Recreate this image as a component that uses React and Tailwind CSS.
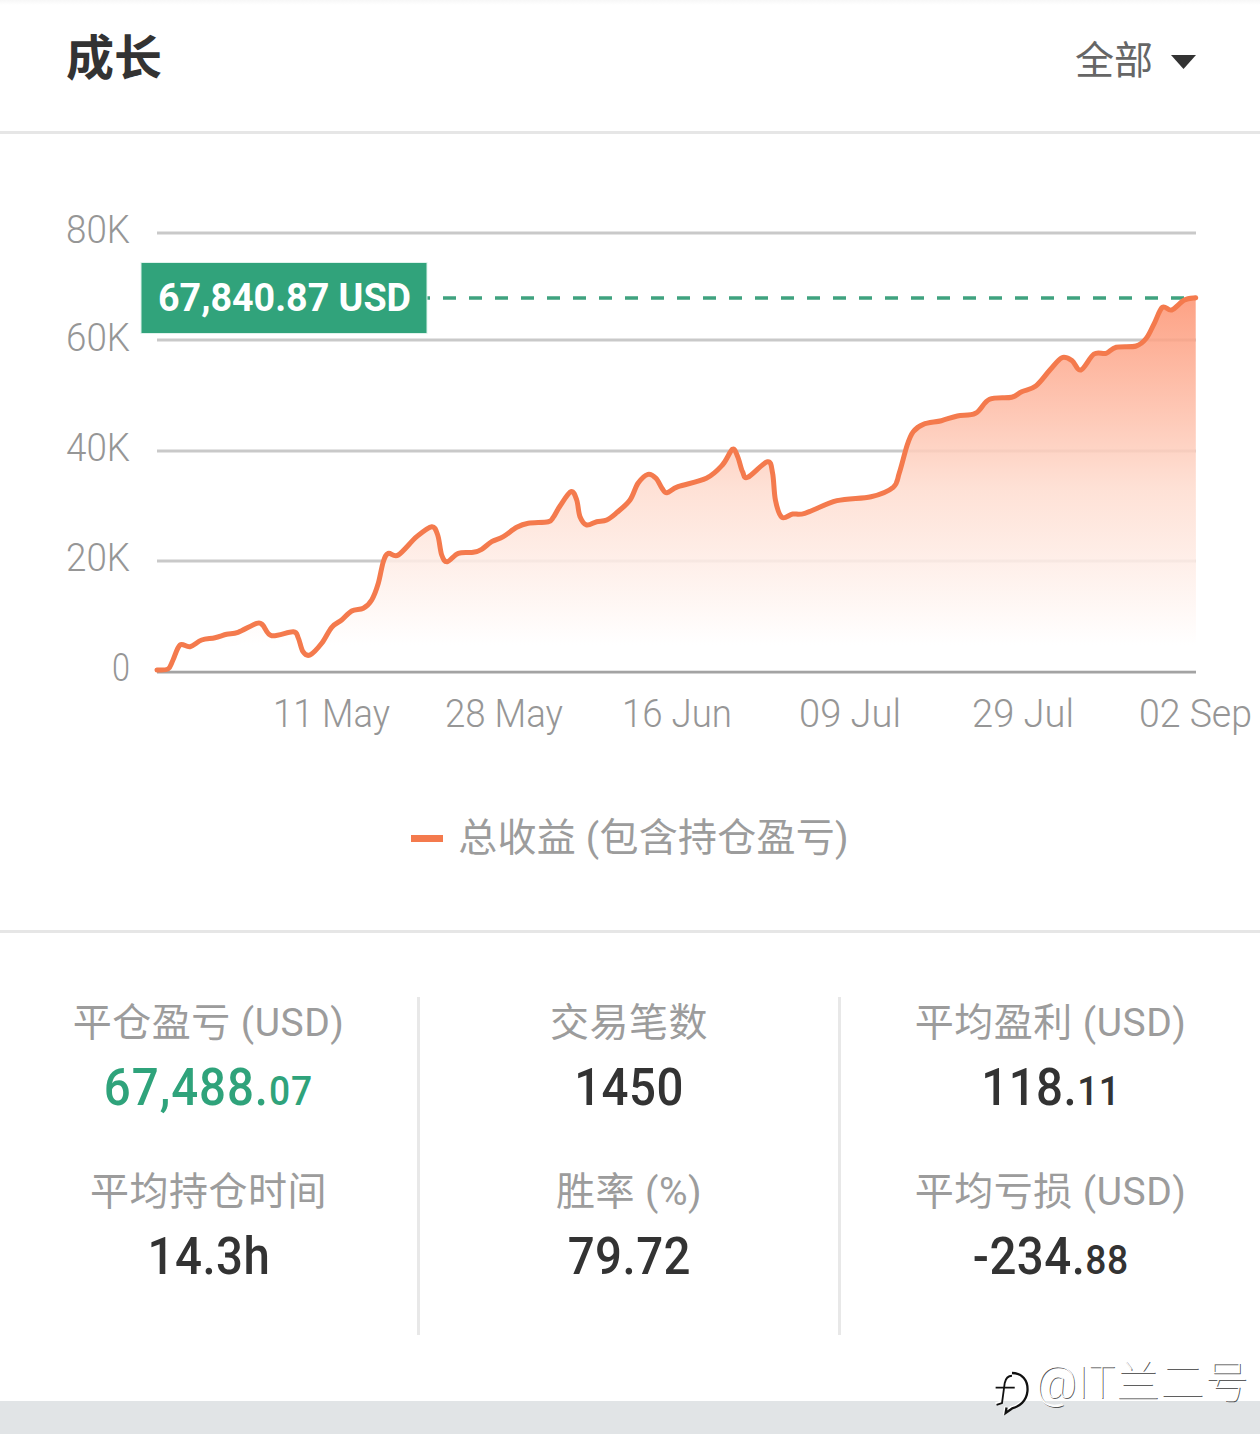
import React from 'react';

const FONT = "font-['Roboto','Noto_Sans_CJK_SC',sans-serif]";

const POINTS = [
  [157, 670], [168, 669], [173, 660], [180, 645], [190, 646.7], [201.7, 640], [215, 637.7], [226.7, 634.3],
  [238, 632.3], [256.7, 623.3], [262.7, 625], [271.7, 635.7], [293.3, 631.7], [298.3, 638], [303, 651.7],
  [310, 655], [321.7, 643.3], [331.7, 627.3], [341.7, 620], [351.7, 611], [363.3, 608.3], [371.7, 600],
  [378.3, 583.3], [383.3, 561.7], [388.3, 553.3], [398.3, 555], [416.7, 536.7], [431.7, 526.7], [437.7, 535],
  [441.7, 555], [447.3, 561.7], [458.3, 553.3], [473.3, 552.3], [481.7, 549.3], [491.7, 541.7], [503.3, 536.7],
  [516.7, 527.3], [528.3, 523.3], [548.3, 521.7], [553.3, 517.3], [560, 506], [571, 491.7], [576.7, 500],
  [580, 516.7], [586.7, 525], [596.7, 521.7], [606.7, 520], [616.7, 512.7], [630, 500], [638, 483.3],
  [648, 474.3], [656, 478.3], [662, 488.3], [667, 492.7], [678, 486.7], [706.3, 478.3], [722.4, 465],
  [732.5, 449.3], [737.7, 456.7], [742.5, 471.7], [747.7, 477.3], [767.4, 461.7], [772.6, 473.3], [775.4, 500],
  [781.9, 517.3], [792.7, 514], [804.8, 513.3], [836.9, 500.7], [871, 496.7], [893.2, 487.3], [899.2, 473.3],
  [907.2, 445], [913.2, 431.7], [923.3, 424.3], [941.4, 420.7], [957.4, 416], [975.5, 413.3], [989.6, 399.3],
  [1011.7, 397.3], [1021.7, 391.7], [1035.8, 386], [1049.9, 370], [1061.9, 357.7], [1072, 360.7], [1080.8, 370],
  [1094, 354], [1106.1, 353.3], [1116.2, 347.3], [1136.2, 346], [1146.3, 338.3], [1154.3, 323.3], [1162.4, 307.3],
  [1171.6, 310], [1184.4, 300], [1195.7, 297.7],
];

// catmull-rom through the points, the chart line is smoothed
const smoothLine = (pts) => {
  let d = `M${pts[0][0]} ${pts[0][1]}`;
  for (let i = 0; i < pts.length - 1; i++) {
    const p0 = pts[Math.max(i - 1, 0)];
    const p1 = pts[i];
    const p2 = pts[i + 1];
    const p3 = pts[Math.min(i + 2, pts.length - 1)];
    const c1x = p1[0] + (p2[0] - p0[0]) / 6;
    const c1y = p1[1] + (p2[1] - p0[1]) / 6;
    const c2x = p2[0] - (p3[0] - p1[0]) / 6;
    const c2y = p2[1] - (p3[1] - p1[1]) / 6;
    d += ` C${c1x.toFixed(1)} ${c1y.toFixed(1)} ${c2x.toFixed(1)} ${c2y.toFixed(1)} ${p2[0]} ${p2[1]}`;
  }
  return d;
};

const LINE = smoothLine(POINTS);
const AREA = `${LINE} L1196 670.5 L157 670.5 Z`;

const GRID = [233, 340, 451, 561];
const Y_LABELS = [
  { text: '80K', y: 243, x: 66, w: 64 },
  { text: '60K', y: 351, x: 66, w: 64 },
  { text: '40K', y: 461, x: 66, w: 64 },
  { text: '20K', y: 571, x: 66, w: 64 },
  { text: '0', y: 681, x: 112, w: 18 },
];
const X_LABELS = [
  { text: '11 May', x: 273, w: 117 },
  { text: '28 May', x: 445, w: 118 },
  { text: '16 Jun', x: 622, w: 110 },
  { text: '09 Jul', x: 799, w: 102 },
  { text: '29 Jul', x: 972, w: 102 },
  { text: '02 Sep', x: 1139, w: 113 },
];

const Chart = () => (
  <svg viewBox="0 134 1260 620" className="block w-[1260px] h-[620px]">
    <defs>
      <linearGradient id="area" x1="0" y1="297" x2="0" y2="645" gradientUnits="userSpaceOnUse">
        <stop offset="0" stopColor="#fd9270" />
        <stop offset="0.55" stopColor="#fedccf" />
        <stop offset="1" stopColor="#ffffff" />
      </linearGradient>
    </defs>
    {GRID.map((y) => (
      <line key={y} x1="157" x2="1196" y1={y} y2={y} stroke="#c9c9c9" strokeWidth="3" />
    ))}
    <line x1="157" x2="1196" y1="672" y2="672" stroke="#a3a3a3" strokeWidth="3" />
    <path d={AREA} fill="url(#area)" fillOpacity="0.86" />
    <line x1="417" x2="1196" y1="298" y2="298" stroke="#3fa27f" strokeWidth="3.5" strokeDasharray="13 13" />
    <path d={LINE} fill="none" stroke="#f47a4d" strokeWidth="5" strokeLinejoin="round" strokeLinecap="round" />
    {Y_LABELS.map((l) => (
      <text key={l.text} x={l.x} y={l.y} textLength={l.w} lengthAdjust="spacingAndGlyphs" fontFamily="Roboto" fontWeight="300" fontSize="39" fill="#969696">
        {l.text}
      </text>
    ))}
    {X_LABELS.map((l) => (
      <text key={l.text} x={l.x} y="727" textLength={l.w} lengthAdjust="spacingAndGlyphs" fontFamily="Roboto" fontWeight="300" fontSize="39" fill="#969696">
        {l.text}
      </text>
    ))}
    <rect x="141" y="262.5" width="286" height="71" fill="#31a37b" stroke="#dff3ec" strokeWidth="1" />
    <text x="158" y="311" textLength="253" lengthAdjust="spacingAndGlyphs" fontFamily="Roboto" fontWeight="700" fontSize="38" fill="#ffffff">
      67,840.87 USD
    </text>
  </svg>
);

const Stat = ({ label, value, small, green }) => (
  <div className="h-[169px] flex flex-col items-center">
    <div className="h-[52px] leading-[52px] text-[39px] tracking-[0.5px] text-[#9c9c9c] whitespace-nowrap">{label}</div>
    <div className={`h-[78px] leading-[78px] whitespace-nowrap scale-x-[0.93] font-medium ${green ? 'text-[#2fa37b] tracking-[1px]' : 'text-[#333333] tracking-[0.5px]'}`}>
      <span className="text-[51px]">{value}</span>
      {small && <span className="text-[40px]">{small}</span>}
    </div>
  </div>
);

const Watermark = () => (
  <div className="absolute left-[992px] top-[1355px] flex items-start h-[60px]">
    <svg viewBox="0 0 44 52" className="w-[40px] h-[50px] mr-[4px] mt-[13px]" fill="none">
      <path d="M22 4c11 0 18 8 17 20-1 11-9 17-17 19l-7 5 1-6" stroke="#ffffff" strokeWidth="3" transform="translate(-1 -1)" />
      <path d="M22 4c11 0 18 8 17 20-1 11-9 17-17 19l-7 5 1-6" stroke="#111111" strokeWidth="2.5" />
      <path d="M4 20h21M22 7c-5 0-7 3-8 8l-3 22-6 2" stroke="#ffffff" strokeWidth="3" transform="translate(-1 -1)" />
      <path d="M4 20h21M22 7c-5 0-7 3-8 8l-3 22-6 2" stroke="#111111" strokeWidth="2" />
    </svg>
    <span className="text-[44px] leading-[56px] tracking-[0.5px] font-thin text-white whitespace-nowrap [text-shadow:1px_1px_0_rgba(0,0,0,0.65),-1px_-1px_0_rgba(255,255,255,0.9)]">
      @IT兰二号
    </span>
  </div>
);

export default function App() {
  return (
    <div className={`relative w-[1260px] h-[1455px] bg-white overflow-hidden ${FONT}`}>
      {/* header */}
      <div className="h-[134px] border-b-[3px] border-[#e6e6e6] bg-gradient-to-b from-[#f7f7f7] to-white to-[5px] flex items-center justify-between pl-[66px] pr-[64px] pb-[8px]">
        <h1 className="text-[48px] font-bold text-[#333333] leading-none mb-[6px]">成长</h1>
        <div className="flex items-center gap-[18px]">
          <span className="text-[39px] text-[#666666]">全部</span>
          <svg viewBox="0 0 25 14" className="w-[25px] h-[14px]">
            <path d="M0 0h25L12.5 14z" fill="#333333" />
          </svg>
        </div>
      </div>

      {/* chart */}
      <Chart />

      {/* legend */}
      <div className="h-[179px] flex items-start justify-center pt-[59px] border-b-[3px] border-[#e6e6e6]">
        <div className="flex items-center gap-[15px] h-[50px]">
          <span className="w-[32px] h-[7px] bg-[#f47a4d]" />
          <span className="text-[39px] tracking-[0.25px] text-[#9c9c9c] whitespace-nowrap">总收益 (包含持仓盈亏)</span>
        </div>
      </div>

      {/* stats */}
      <div className="grid grid-cols-[420px_421px_419px] pt-[64px] h-[468px]">
        <div className="h-[338px] border-r-[3px] border-[#e8e8e8]">
          <Stat label="平仓盈亏 (USD)" value="67,488." small="07" green />
          <Stat label="平均持仓时间" value="14.3h" />
        </div>
        <div className="h-[338px] border-r-[3px] border-[#e8e8e8]">
          <Stat label="交易笔数" value="1450" />
          <Stat label="胜率 (%)" value="79.72" />
        </div>
        <div className="h-[338px]">
          <Stat label="平均盈利 (USD)" value="118." small="11" />
          <Stat label="平均亏损 (USD)" value="-234." small="88" />
        </div>
      </div>

      <div className="h-[33px] bg-[#e1e4e6]" />
      <Watermark />
    </div>
  );
}
